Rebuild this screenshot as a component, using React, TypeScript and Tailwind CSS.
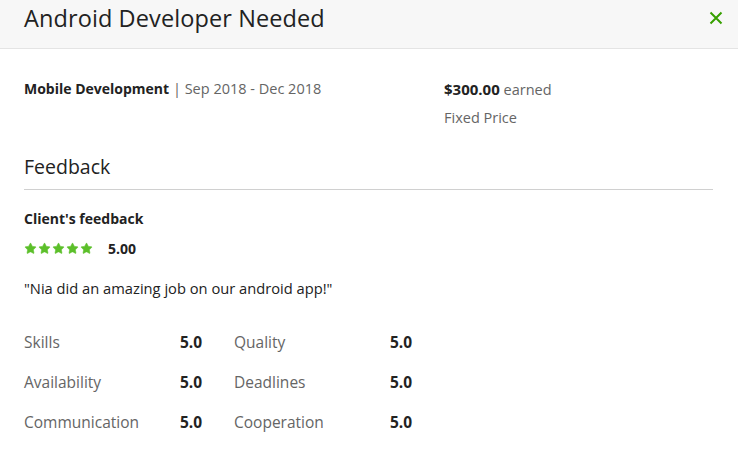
import { Star } from "lucide-react";

function Stars() {
  return (
    <div className="flex items-center gap-[1px]">
      {[0, 1, 2, 3, 4].map((i) => (
        <Star key={i} className="w-[13px] h-[13px] text-[#5cbf2a]" fill="#5cbf2a" strokeWidth={1} />
      ))}
    </div>
  );
}

const ratings = [
  ["Skills", "5.0", "Quality", "5.0"],
  ["Availability", "5.0", "Deadlines", "5.0"],
  ["Communication", "5.0", "Cooperation", "5.0"],
];

function App() {
  return (
    <div className="w-[738px] h-[468px] bg-white text-[#222] font-['Open_Sans',sans-serif] overflow-hidden">
      {/* Header */}
      <header className="h-[49px] bg-[#f7f7f7] border-b border-[#e4e4e4] flex items-center justify-between pl-6 pr-[15px] pb-[12px]">
        <h1 className="text-[23.5px] leading-[30px] text-[#222] tracking-[0.1px]">Android Developer Needed</h1>
        <svg width="14" height="14" viewBox="0 0 14 14">
          <path d="M1.5 1.5 L12.5 12.5 M12.5 1.5 L1.5 12.5" stroke="#37a000" strokeWidth="2" />
        </svg>
      </header>

      <main className="px-6">
        {/* Job info */}
        <section className="flex pt-[30px] text-[14.5px] leading-[20px]">
          <div className="w-[420px]">
            <span className="font-bold text-[14px]">Mobile Development</span>
            <span className="text-[#656565]"> | Sep 2018 - Dec 2018</span>
          </div>
          <div className="text-[#656565]">
            <p>
              <span className="font-bold text-[#222] text-[15px]">$300.00</span> earned
            </p>
            <p className="mt-[8px]">Fixed Price</p>
          </div>
        </section>

        {/* Feedback */}
        <section className="mt-[27px]">
          <h2 className="text-[19.5px] leading-[24px] pb-[10px] border-b border-[#d0d0d0] w-[689px]">Feedback</h2>
          <h3 className="text-[14px] leading-[20px] font-bold mt-[19px]">Client's feedback</h3>
          <div className="flex items-center h-[20px] gap-[15px] mt-[9px]">
            <Stars />
            <span className="text-[14px] font-bold">5.00</span>
          </div>
          <p className="text-[14.7px] leading-[20px] mt-[20px]">"Nia did an amazing job on our android app!"</p>

          <div className="mt-[34px] flex flex-col gap-[20px] text-[15.5px] leading-[20px]">
            {ratings.map((r) => (
              <div key={r[0]} className="flex items-center">
                <span className="w-[156px] text-[#656565]">{r[0]}</span>
                <span className="w-[54px] font-bold">{r[1]}</span>
                <span className="w-[156px] text-[#656565]">{r[2]}</span>
                <span className="font-bold">{r[3]}</span>
              </div>
            ))}
          </div>
        </section>
      </main>
    </div>
  );
}

export default App;
